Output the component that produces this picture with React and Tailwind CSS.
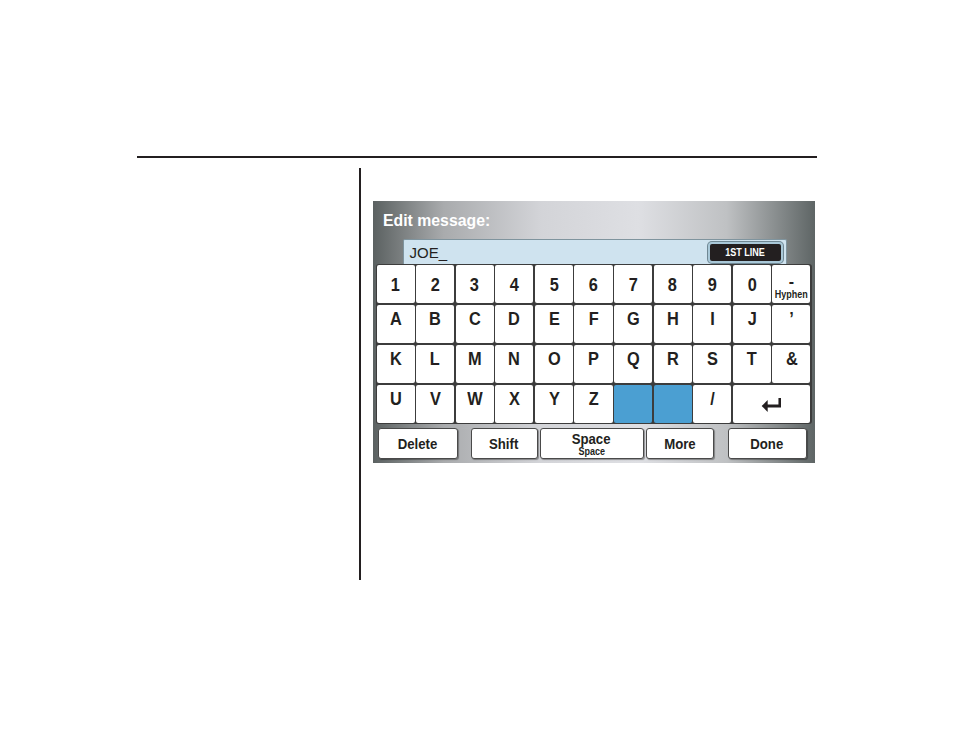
import React from 'react';

const numbers = ['1', '2', '3', '4', '5', '6', '7', '8', '9', '0'];
const rowA = ['A', 'B', 'C', 'D', 'E', 'F', 'G', 'H', 'I', 'J', '\u2019'];
const rowK = ['K', 'L', 'M', 'N', 'O', 'P', 'Q', 'R', 'S', 'T', '&'];
const rowU = ['U', 'V', 'W', 'X', 'Y', 'Z'];

const font = { fontFamily: '"Liberation Sans", Arial, sans-serif' };

const Key = ({ children, top = false, className = '' }) => (
  <div
    className={
      'flex justify-center rounded-[2px] bg-white text-[19px] font-bold leading-none text-[#231f20] ' +
      (top ? 'items-start pt-[4px] ' : 'items-center ') +
      className
    }
  >
    <span className="inline-block scale-x-[0.86]">{children}</span>
  </div>
);

const BarButton = ({ children, className = '' }) => (
  <div
    className={
      'flex flex-col items-center justify-center rounded-[3px] border border-[#4a4a4a] bg-white text-[15px] font-bold leading-none text-[#231f20] shadow-[1px_1px_1px_rgba(0,0,0,0.35)] ' +
      className
    }
  >
    {children}
  </div>
);

const EnterIcon = () => (
  <svg width="26" height="16" viewBox="0 0 26 16">
    <path d="M22 1v8H6" fill="none" stroke="#231f20" strokeWidth="3" />
    <path d="M1 9l7-6v12z" fill="#231f20" />
  </svg>
);

export default function App() {
  return (
    <div className="min-h-[738px] w-[954px] bg-white" style={font}>
      <div className="pl-[137px] pt-[156px]">
        <div className="h-[2px] w-[680px] bg-[#231f20]" />
        <div className="mt-[10px] flex">
          <div className="w-[222px]" />
          <div className="h-[412px] w-[1.5px] bg-[#231f20]" />
          <div className="ml-[12px] mt-[33px] h-[262px] w-[442px] bg-[linear-gradient(to_right,#5b6161_0%,#a9abad_16%,#d3d4d8_38%,#dedfe3_60%,#bfc1c3_80%,#5e6565_100%)] pt-[10px]">
            <div className="pl-[10px] text-[17px] font-bold leading-[20px] text-white">
              <span className="inline-block origin-left scale-x-[0.93]">Edit message:</span>
            </div>
            <div className="ml-[30px] mt-[8px] flex h-[25px] w-[384px] items-center justify-between rounded-t-[2px] border border-b-0 border-[#7f949e] bg-[#cfe3ef] pl-[6px] pr-[3px]">
              <span className="text-[15px] leading-none text-[#231f20]">JOE_</span>
              <div className="flex h-[21px] w-[75px] items-center justify-center rounded-[4px] border-2 border-[#a9c8d8] bg-[#231f20] text-[10px] font-bold text-white shadow-[0_0_0_1px_#6f8793]">
                <span className="inline-block scale-x-[0.9]">1ST LINE</span>
              </div>
            </div>
            <div className="ml-[3px] grid h-[160px] w-[436px] grid-cols-11 grid-rows-4 gap-[1.5px] rounded-[3px] bg-[#3c3c3c] p-[1px]">
              {numbers.map((n) => (
                <Key key={n}>{n}</Key>
              ))}
              <div className="flex flex-col items-center justify-end rounded-[2px] bg-white pb-[3px] font-bold leading-none text-[#231f20]">
                <span className="text-[16px] leading-[8px]">-</span>
                <span className="mt-[4px] inline-block scale-x-[0.9] text-[10px]">Hyphen</span>
              </div>
              {rowA.map((n) => (
                <Key key={n} top>
                  {n}
                </Key>
              ))}
              {rowK.map((n) => (
                <Key key={n} top>
                  {n}
                </Key>
              ))}
              {rowU.map((n) => (
                <Key key={n} top>
                  {n}
                </Key>
              ))}
              <div className="rounded-[2px] bg-[#4b9fd2]" />
              <div className="rounded-[2px] bg-[#4b9fd2]" />
              <Key top>/</Key>
              <Key className="col-span-2 pt-[2px]">
                <EnterIcon />
              </Key>
            </div>
            <div className="mt-[4px] flex h-[31px] items-stretch pl-[5px]">
              <BarButton className="w-[80px]">
                <span className="inline-block scale-x-[0.88]">Delete</span>
              </BarButton>
              <BarButton className="ml-[13px] w-[67px]">
                <span className="inline-block scale-x-[0.88]">Shift</span>
              </BarButton>
              <BarButton className="ml-[2px] w-[104px]">
                <span className="inline-block scale-x-[0.88]">Space</span>
                <span className="mt-[1px] inline-block scale-x-[0.9] text-[10px]">Space</span>
              </BarButton>
              <BarButton className="ml-[2px] w-[68px]">
                <span className="inline-block scale-x-[0.88]">More</span>
              </BarButton>
              <BarButton className="ml-[14px] w-[79px]">
                <span className="inline-block scale-x-[0.88]">Done</span>
              </BarButton>
            </div>
          </div>
        </div>
      </div>
    </div>
  );
}
